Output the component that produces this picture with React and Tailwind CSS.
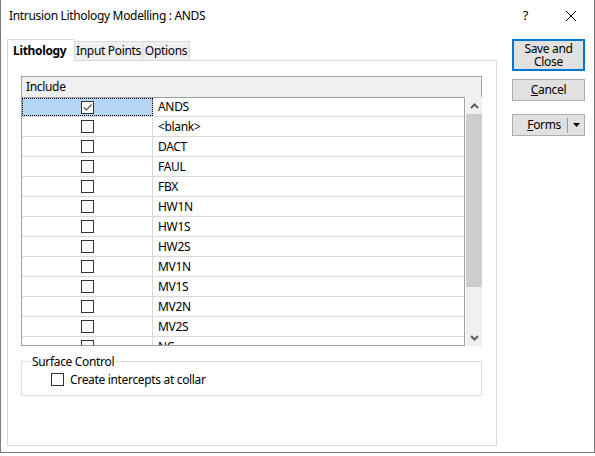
import React from "react";

const rows = [
  { name: "ANDS", checked: true },
  { name: "<blank>" },
  { name: "DACT" },
  { name: "FAUL" },
  { name: "FBX" },
  { name: "HW1N" },
  { name: "HW1S" },
  { name: "HW2S" },
  { name: "MV1N" },
  { name: "MV1S" },
  { name: "MV2N" },
  { name: "MV2S" },
  { name: "NC" },
];

const Check = ({ checked }) => (
  <div className="w-[13px] h-[13px] border border-[#333333] bg-white flex items-center justify-center">
    {checked && (
      <svg width="11" height="11" viewBox="0 0 11 11">
        <path d="M2 5.5 L4.5 8 L9.5 2.5" fill="none" stroke="#555555" strokeWidth="1.2" />
      </svg>
    )}
  </div>
);

const Chevron = ({ down }) => (
  <svg width="9" height="6" viewBox="0 0 9 6">
    <path
      d={down ? "M1 1 L4.5 4.5 L8 1" : "M1 5 L4.5 1.5 L8 5"}
      fill="none"
      stroke="#606060"
      strokeWidth="2"
    />
  </svg>
);

const Row = ({ row, index }) => (
  <div
    className={`flex border-b border-[#d9d9d9] ${index === 0 ? "h-[19px]" : "h-[20px]"}`}
  >
    <div
      className={`w-[131px] border-r border-[#d9d9d9] flex items-center justify-center ${
        index === 0
          ? "bg-[#b5d6f5] outline-1 outline-dotted outline-black -outline-offset-1"
          : ""
      }`}
    >
      <Check checked={row.checked} />
    </div>
    <div className="flex-1 pl-[5px] flex items-center">{row.name}</div>
  </div>
);

const App = () => {
  return (
    <div
      className="w-[595px] h-[456px] bg-white overflow-hidden text-[12px] tracking-[-0.33px] text-black whitespace-nowrap"
      style={{ fontFamily: "'Noto Sans', sans-serif" }}
    >
      <div className="h-[453px] border-l border-r border-b border-[#7a7a7a] flex flex-col">
        {/* title bar */}
        <div className="h-[32px] flex items-center pl-[8px]">
          <span className="flex-1">Intrusion Lithology Modelling : ANDS</span>
          <span className="text-[13px] mr-[38px]">?</span>
          <svg width="10" height="10" viewBox="0 0 10 10" className="mr-[18px]">
            <path d="M0 0 L10 10 M10 0 L0 10" stroke="#000" strokeWidth="1" />
          </svg>
        </div>

        <div className="flex pl-[6px] pt-[7px]">
          {/* tabs + panel */}
          <div className="w-[490px] flex flex-col">
            <div className="h-[21px] flex items-end">
              <div className="relative z-10 w-[68px] h-[22px] -mb-[1px] bg-white border-t border-l border-r border-[#d9d9d9] pl-[5px] pt-[2px] font-bold">
                Lithology
              </div>
              <div className="w-[68px] h-[19px] bg-[#f0f0f0] border-t border-r border-[#d9d9d9] flex items-center justify-center">
                Input Points
              </div>
              <div className="w-[47px] h-[19px] bg-[#f0f0f0] border-t border-r border-[#d9d9d9] flex items-center justify-center">
                Options
              </div>
            </div>
            <div className="h-[386px] border border-[#d9d9d9] px-[13px] pt-[15px]">
              {/* grid */}
              <div className="w-[461px]">
                <div className="h-[21px] bg-[#f0f0f0] border-t border-l border-r border-[#a0a0a0] pl-[4px] flex items-center">
                  Include
                </div>
                <div className="flex h-[249px]">
                  <div className="w-[444px] border border-[#a0a0a0] overflow-hidden">
                    {rows.map((row, i) => (
                      <Row key={row.name} row={row} index={i} />
                    ))}
                  </div>
                  <div className="ml-[1px] w-[16px] bg-[#f0f0f0] flex flex-col">
                    <div className="h-[17px] flex items-center justify-center">
                      <Chevron />
                    </div>
                    <div className="h-[173px] bg-[#cdcdcd]" />
                    <div className="flex-1" />
                    <div className="h-[17px] flex items-center justify-center">
                      <Chevron down />
                    </div>
                  </div>
                </div>
              </div>

              {/* surface control */}
              <div className="relative mt-[15px] w-[461px] h-[35px] border border-[#dcdcdc] pl-[29px] pt-[11px]">
                <span className="absolute -top-[9px] left-[9px] bg-white px-[1px]">
                  Surface Control
                </span>
                <div className="flex items-center">
                  <Check />
                  <span className="ml-[6px] leading-[13px]">Create intercepts at collar</span>
                </div>
              </div>
            </div>
          </div>

          {/* buttons */}
          <div className="ml-[15px] w-[73px] flex flex-col">
            <div className="h-[32px] border-2 border-[#0078d7] bg-[#e1e1e1] flex items-center justify-center">
              <span className="text-center leading-[13px]">
                Save and
                <br />
                Close
              </span>
            </div>
            <div className="mt-[8px] h-[22px] border border-[#adadad] bg-[#e1e1e1] flex items-center justify-center">
              <span>
                <span className="underline">C</span>ancel
              </span>
            </div>
            <div className="mt-[13px] h-[22px] border border-[#adadad] bg-[#e1e1e1] flex items-center">
              <span className="flex-1 text-right pr-[6px]">
                <span className="underline">F</span>orms
              </span>
              <div className="w-px h-[15px] bg-[#9a9a9a]" />
              <div className="w-[16px] flex items-center justify-center">
                <svg width="7" height="4" viewBox="0 0 7 4">
                  <path d="M0 0 H7 L3.5 4 Z" fill="#000" />
                </svg>
              </div>
            </div>
          </div>
        </div>
      </div>
    </div>
  );
};

export default App;
